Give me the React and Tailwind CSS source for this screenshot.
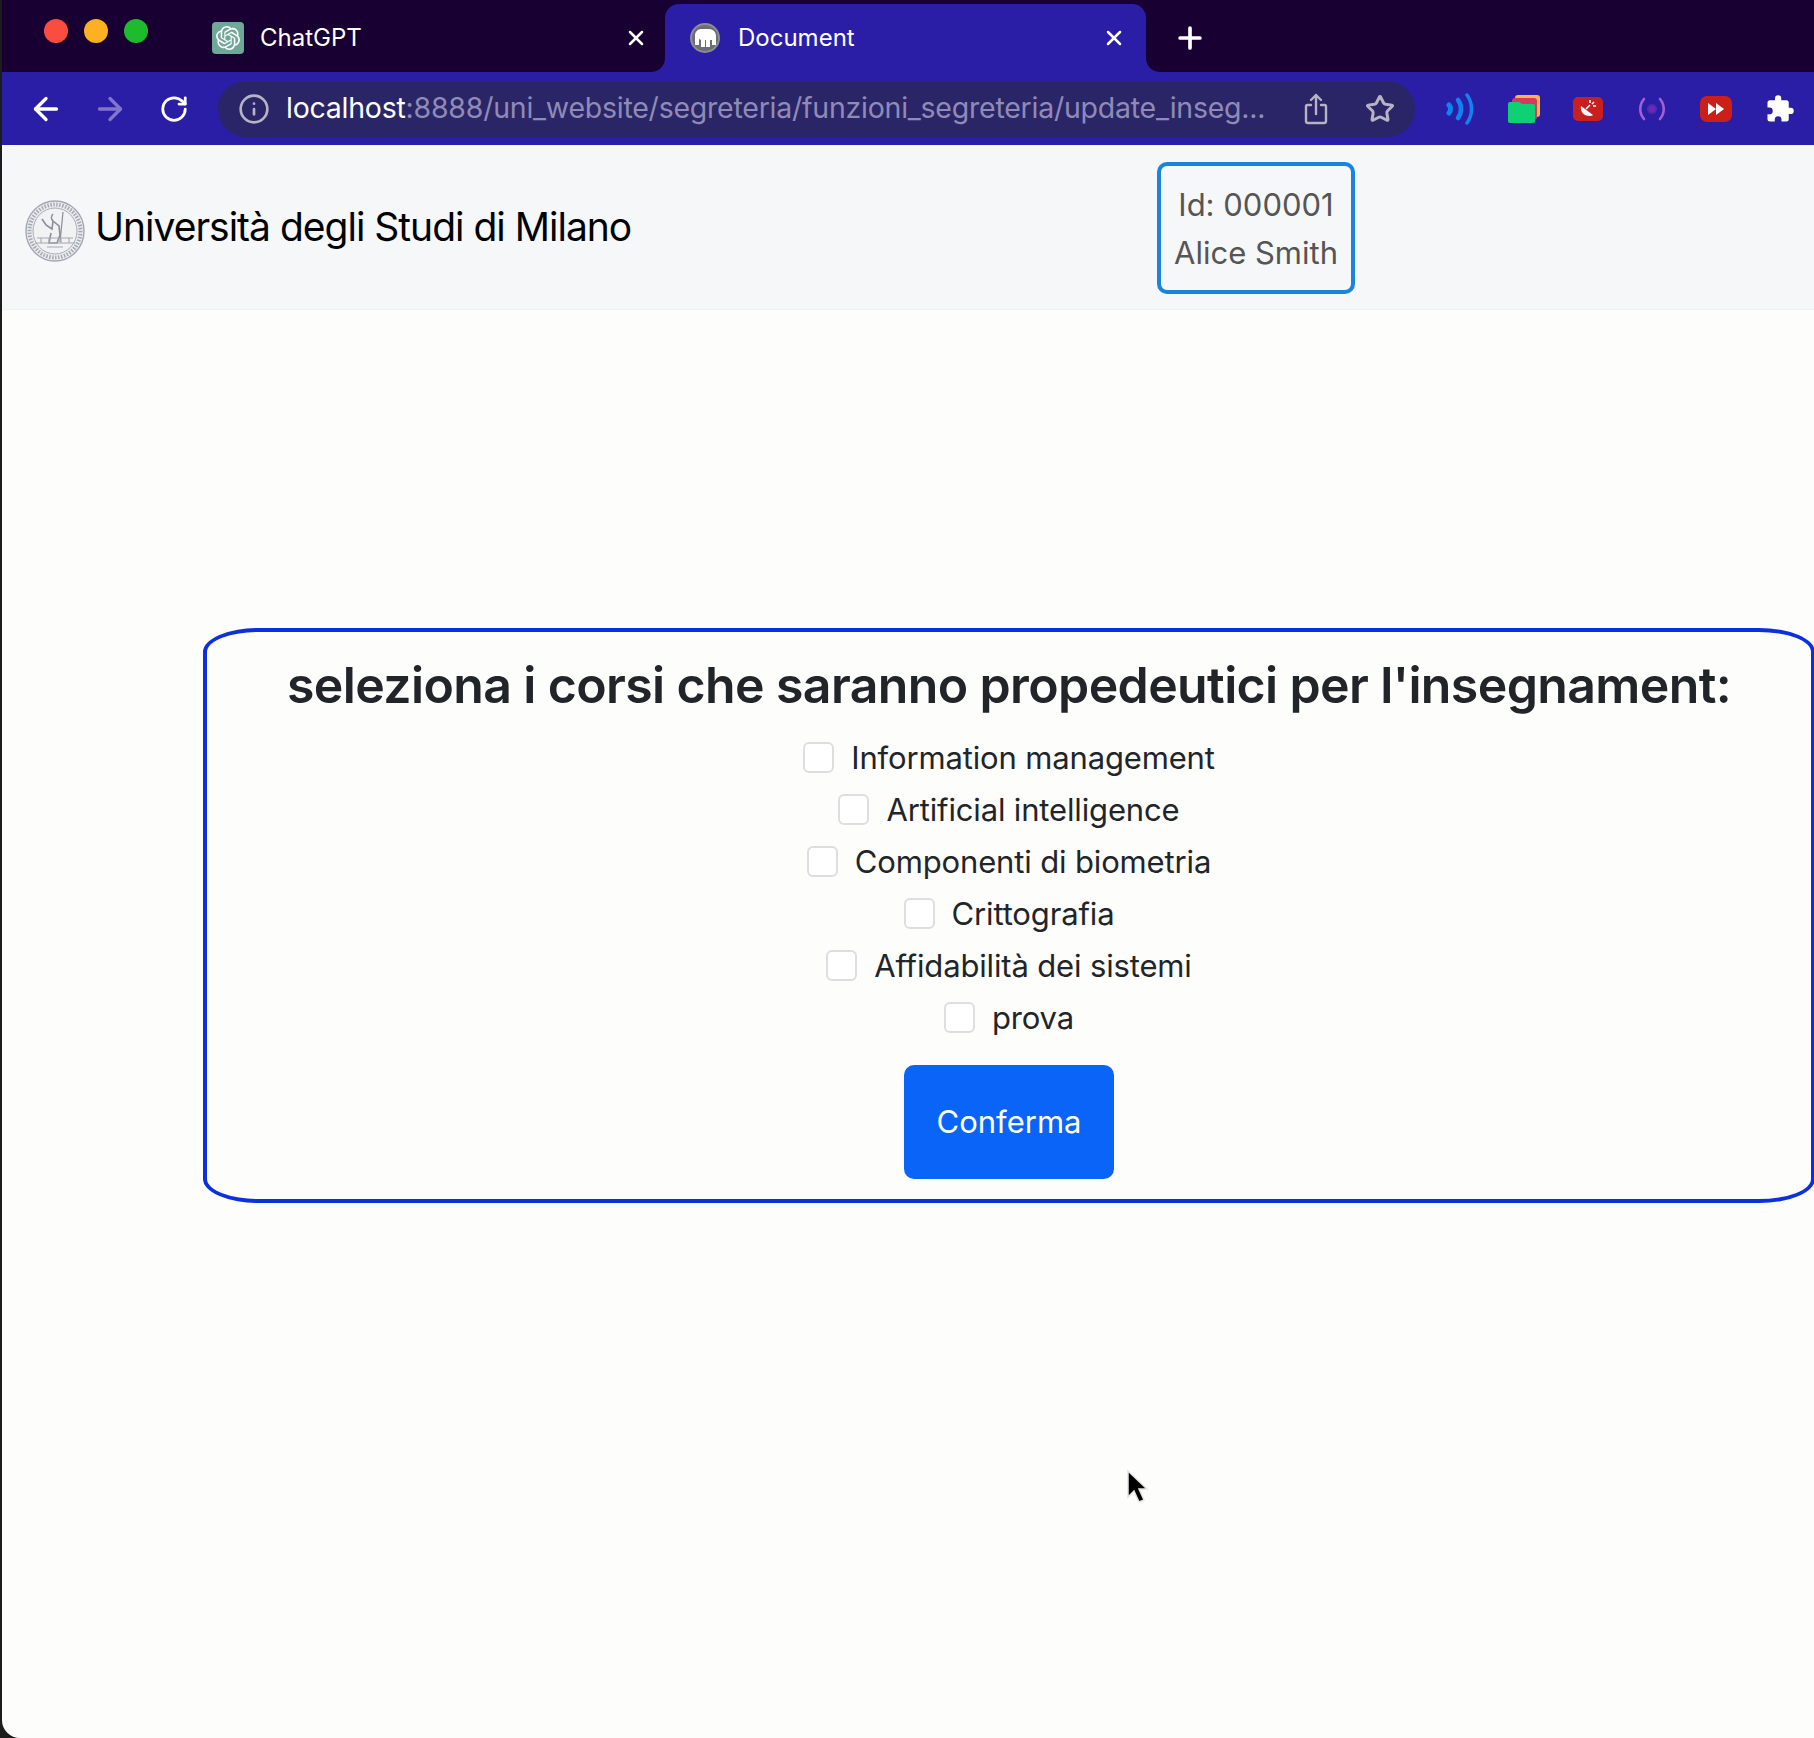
import React from "react";
import { ArrowLeft, ArrowRight, RotateCw, Info, Star, Plus, X } from "lucide-react";
import { SiOpenai } from "react-icons/si";

const courses = [
  "Information management",
  "Artificial intelligence",
  "Componenti di biometria",
  "Crittografia",
  "Affidabilità dei sistemi",
  "prova",
];

function Seal() {
  return (
    <svg width="60" height="62" viewBox="0 0 60 62" className="shrink-0 translate-y-[4px]">
      <ellipse cx="30" cy="31" rx="29" ry="30" fill="#eceef2" stroke="#a4a7b2" strokeWidth="1.400" />
      <ellipse cx="30" cy="31" rx="25.500" ry="26.500" fill="none" stroke="#8e919e" strokeWidth="4" strokeDasharray="1.500 1.500" opacity="0.75" />
      <ellipse cx="30" cy="31" rx="22" ry="23" fill="#f1f2f3" stroke="#a9abb5" strokeWidth="1" />
      <path d="M28 14c-2 2-2 5 0 7l-1 8-6-4-4-6M28 21l6 5 1 9-3 8h-8l2-10" fill="none" stroke="#8b8d99" strokeWidth="1.600" />
      <path d="M38 12l-3 30" fill="none" stroke="#8b8d99" strokeWidth="1.200" />
      <path d="M12 38h36M10 43h40M16 38v5M24 38v5M36 38v5M44 38v5M22 47h16" fill="none" stroke="#a6a8b2" strokeWidth="1.100" />
    </svg>
  );
}

function Elephant() {
  return (
    <div className="w-[30px] h-[30px] rounded-full bg-[#6d6d78] border-2 border-[#8e8e92] flex items-center justify-center shrink-0">
      <svg width="22" height="20" viewBox="0 0 22 20">
        <path d="M1 7c0-3 3-6 6-6h8c4 0 7 3 7 7v9h-4v-5h-2v7h-4v-7h-1v7H7v-7l-2-1v6H1z" fill="#fff" />
      </svg>
    </div>
  );
}

function ShareIcon() {
  return (
    <svg width="24" height="32" viewBox="0 0 24 32" fill="none" stroke="#b5b3c4" strokeWidth="2.400" strokeLinecap="round" strokeLinejoin="round">
      <path d="M7 12H3.500A1.500 1.500 0 0 0 2 13.500V28a2 2 0 0 0 2 2h16a2 2 0 0 0 2-2V13.500A1.500 1.500 0 0 0 20.500 12H17" />
      <path d="M12 21V2M7 7l5-5 5 5" />
    </svg>
  );
}

function Ext({ children }) {
  return <div className="w-[64px] h-[40px] flex items-center justify-center shrink-0">{children}</div>;
}

export default function App() {
  return (
    <div className="w-[1814px] h-[1738px] overflow-hidden bg-[#1c1c1c] font-['Inter',sans-serif]">
      <div className="w-[1812px] h-[1738px] ml-[2px] rounded-bl-[18px] overflow-hidden bg-[#fdfdfc] flex flex-col">
        <div className="h-[72px] bg-[#190032] flex items-start shrink-0">
          <div className="flex gap-[16px] ml-[42px] mt-[19px] shrink-0">
            <div className="w-[24px] h-[24px] rounded-full bg-[#fb4d3f]" />
            <div className="w-[24px] h-[24px] rounded-full bg-[#fdb022]" />
            <div className="w-[24px] h-[24px] rounded-full bg-[#1ebb2f]" />
          </div>
          <div className="ml-[64px] w-[453px] h-[72px] flex items-center pt-[4px] pr-[17px] shrink-0">
            <div className="w-[32px] h-[32px] rounded-[4px] bg-[#6fa896] flex items-center justify-center shrink-0">
              <SiOpenai size={24} color="#ffffff" />
            </div>
            <span className="ml-[16px] flex-1 text-[24px] text-white">ChatGPT</span>
            <X size={24} color="#ffffff" strokeWidth={2.500} />
          </div>
          <div className="relative mt-[4px] w-[481px] h-[68px] bg-[#2b1ea6] rounded-t-[14px] flex items-center pl-[25px] pr-[20px] shrink-0">
            <div className="absolute left-[-14px] bottom-0 w-[14px] h-[14px] bg-[#2b1ea6]">
              <div className="w-full h-full bg-[#190032] rounded-br-[14px]" />
            </div>
            <div className="absolute right-[-14px] bottom-0 w-[14px] h-[14px] bg-[#2b1ea6]">
              <div className="w-full h-full bg-[#190032] rounded-bl-[14px]" />
            </div>
            <Elephant />
            <span className="ml-[18px] flex-1 text-[24px] text-white">Document</span>
            <X size={24} color="#ffffff" strokeWidth={2.500} />
          </div>
          <div className="ml-[27px] mt-[21px] shrink-0">
            <Plus size={34} color="#ffffff" strokeWidth={2.600} />
          </div>
        </div>

        <div className="h-[73px] bg-[#2b1ea6] flex items-center pl-[26px] shrink-0">
          <ArrowLeft size={36} color="#ffffff" strokeWidth={2.200} className="shrink-0" />
          <ArrowRight size={36} color="#8077cc" strokeWidth={2.200} className="ml-[28px] shrink-0" />
          <RotateCw size={30} color="#ffffff" strokeWidth={2.200} className="ml-[31px] shrink-0" />
          <div className="ml-[29px] w-[1197px] h-[56px] rounded-full bg-[#2a2566] flex items-center pl-[20px] pr-[20px] shrink-0">
            <Info size={32} color="#b5b3c4" strokeWidth={2} className="shrink-0" />
            <div className="ml-[16px] flex-1 min-w-0 text-[28.500px] tracking-[-0.24px] whitespace-nowrap text-[#8f8bb6]">
              <span className="text-white">localhost</span>:8888/uni_website/segreteria/funzioni_segreteria/update_inseg...
            </div>
            <div className="flex items-center gap-[37px] shrink-0">
              <ShareIcon />
              <Star size={30} color="#b5b3c4" strokeWidth={2.400} />
            </div>
          </div>
          <div className="ml-[13px] flex items-center shrink-0">
            <Ext>
              <svg width="28" height="32" viewBox="0 0 28 32" fill="none" stroke="#1083f0" strokeLinecap="round">
                <path d="M3 12c2 2 2 6 0 8" strokeWidth="5" />
                <path d="M12 7c4 5 4 13 0 18" strokeWidth="4.500" />
                <path d="M21 2c6 8 6 20 0 28" strokeWidth="3.500" />
              </svg>
            </Ext>
            <Ext>
              <svg width="32" height="28" viewBox="0 0 32 28">
                <rect x="7" y="0" width="25" height="22" rx="3" fill="#f4b74a" />
                <rect x="4" y="3" width="25" height="22" rx="3" fill="#d63a5e" />
                <path d="M0 9a2 2 0 0 1 2-2h9l3 2h11a2 2 0 0 1 2 2v15a2 2 0 0 1-2 2H2a2 2 0 0 1-2-2z" fill="#10d076" />
              </svg>
            </Ext>
            <Ext>
              <svg width="30" height="24" viewBox="0 0 30 24">
                <rect width="30" height="24" rx="5" fill="#c8201e" />
                <path d="M8 9c-1 5 2 10 9 10 2 0 3-1 3-1z" fill="#fff" />
                <path d="M13 12l4-4M17 3v3M23 9h-3M21 5l-2 2" stroke="#fff" strokeWidth="1.600" fill="none" />
              </svg>
            </Ext>
            <Ext>
              <svg width="28" height="24" viewBox="0 0 28 24" fill="none" strokeLinecap="round">
                <path d="M6 2c-5 6-5 14 0 20M22 2c5 6 5 14 0 20" stroke="#a45fd6" strokeWidth="2.600" />
                <circle cx="14" cy="12" r="5" fill="#4f2cae" />
                <circle cx="14" cy="12" r="3" fill="#7226b8" />
              </svg>
            </Ext>
            <Ext>
              <svg width="32" height="26" viewBox="0 0 32 26">
                <rect width="32" height="26" rx="7" fill="#cc1f1a" />
                <path d="M8 7l8 6-8 6zM16 7l8 6-8 6z" fill="#fff" />
              </svg>
            </Ext>
            <Ext>
              <svg width="30" height="30" viewBox="0 0 24 24" fill="#ffffff">
                <path d="M20.500 11H19V7a2 2 0 0 0-2-2h-4V3.500a2.500 2.500 0 0 0-5 0V5H4a2 2 0 0 0-2 2v3.800h1.500a2.700 2.700 0 0 1 0 5.400H2V20a2 2 0 0 0 2 2h3.800v-1.500a2.700 2.700 0 0 1 5.400 0V22H17a2 2 0 0 0 2-2v-4h1.500a2.500 2.500 0 0 0 0-5z" />
              </svg>
            </Ext>
          </div>
        </div>

        <div className="h-[165px] bg-[#f6f7f9] border-b border-[#f1f1f1] flex items-center shrink-0">
          <div className="w-[1155px] flex items-center pl-[23px] shrink-0">
            <Seal />
            <span className="ml-[10px] text-[39px] text-black tracking-[-1px]">Università degli Studi di Milano</span>
          </div>
          <div className="mt-[2px] w-[198px] h-[132px] border-4 border-[#1a85dc] rounded-[10px] pt-[2px] flex flex-col items-center justify-center text-[31px] leading-[48px] text-[#555555] shrink-0">
            <span>Id: 000001</span>
            <span>Alice Smith</span>
          </div>
        </div>

        <div className="ml-[201px] mt-[318px] w-[1612px] h-[575px] border-4 border-[#0a30e0] rounded-[56px_/_24px] flex flex-col items-center pt-[22px] shrink-0">
          <h1 className="text-[50px] leading-[62px] font-semibold tracking-[-0.62px] text-[#212529] whitespace-nowrap">
            seleziona i corsi che saranno propedeutici per l'insegnament:
          </h1>
          <div className="mt-[15px] flex flex-col">
            {courses.map((c) => (
              <div key={c} className="h-[52px] flex items-center justify-center gap-[17px]">
                <div className="w-[31px] h-[31px] rounded-[6px] border-2 border-[#dcdedf] bg-white shrink-0" />
                <span className="pt-[2px] text-[31px] tracking-[-0.15px] text-[#212529]">{c}</span>
              </div>
            ))}
          </div>
          <button className="mt-[22px] w-[210px] h-[114px] pt-[1px] rounded-[10px] bg-[#0b64f8] text-white text-[31px]">Conferma</button>
        </div>

        <div className="relative">
          <svg width="22" height="36" viewBox="0 0 22 36" className="absolute left-[1124px] top-[266px]">
            <path d="M2 2v26l6-6 5 11 5-2-5-11h8z" fill="#000000" stroke="#e4e4e4" strokeWidth="1.500" />
          </svg>
        </div>
      </div>
    </div>
  );
}
